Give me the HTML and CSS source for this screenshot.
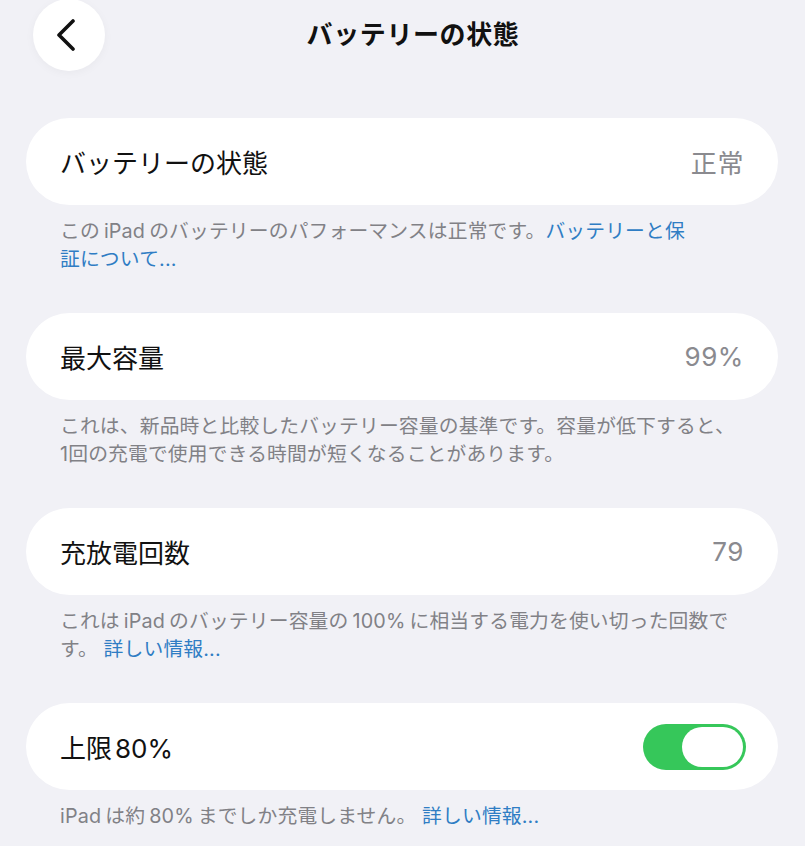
FILE: index.html
```html
<!DOCTYPE html>
<html lang="ja">
<head>
<meta charset="utf-8">
<title>バッテリーの状態</title>
<link rel="stylesheet" href="styles.css">
</head>
<body>
<div class="page">
  <header class="header">
    <div class="back">
      <svg width="20" height="32" viewBox="0 0 20 32" aria-hidden="true">
        <path d="M17 2 L3 16 L17 30" fill="none" stroke="#111" stroke-width="3.6" stroke-linecap="round" stroke-linejoin="round"/>
      </svg>
    </div>
    <h1 class="title">バッテリーの状態</h1>
    <div></div>
  </header>

  <main class="list">
    <section class="section">
      <div class="card">
        <span class="label">バッテリーの状態</span>
        <span class="value">正常</span>
      </div>
      <p class="note">この<span class="lat">iPad</span>のバッテリーのパフォーマンスは正常です。<span class="link">バッテリーと保<br>証について...</span></p>
    </section>

    <section class="section">
      <div class="card">
        <span class="label">最大容量</span>
        <span class="value">99%</span>
      </div>
      <p class="note">これは、新品時と比較したバッテリー容量の基準です。容量が低下すると、<br>1回の充電で使用できる時間が短くなることがあります。</p>
    </section>

    <section class="section">
      <div class="card">
        <span class="label">充放電回数</span>
        <span class="value">79</span>
      </div>
      <p class="note">これは<span class="lat">iPad</span>のバッテリー容量の<span class="lat">100%</span>に相当する電力を使い切った回数で<br>す。 <span class="link">詳しい情報...</span></p>
    </section>

    <section class="section">
      <div class="card">
        <span class="label">上限<span class="num">80%</span></span>
        <span class="toggle"><span class="knob"></span></span>
      </div>
      <p class="note"><span class="lat first">iPad</span>は約<span class="lat">80%</span>までしか充電しません。 <span class="link">詳しい情報...</span></p>
    </section>
  </main>
</div>
</body>
</html>
```

FILE: styles.css
```css
* { box-sizing: border-box; }

html, body {
  margin: 0;
  padding: 0;
}

body {
  background: #f1f1f6;
  font-family: Inter, "Noto Sans CJK JP", "Noto Sans", sans-serif;
  color: #111;
  width: 805px;
  height: 846px;
  overflow: hidden;
}

.page {
  padding: 0 27px 0 26px;
}

.header {
  display: grid;
  grid-template-columns: 80px 1fr 80px;
  align-items: center;
  height: 72px;
  margin-top: -1px;
}

.back {
  width: 72px;
  height: 72px;
  margin-left: 7px;
  border-radius: 50%;
  background: #ffffff;
  display: flex;
  align-items: center;
  justify-content: center;
  padding-right: 6px;
  box-shadow: 0 2px 10px rgba(0, 0, 0, 0.04);
}

.title {
  margin: 0;
  text-align: center;
  font-size: 26px;
  font-weight: 700;
  letter-spacing: 0.6px;
  padding-left: 22px;
  line-height: 1;
}

.list {
  margin-top: 47px;
}

.section {
  padding-bottom: 40px;
}

.card {
  height: 87px;
  border-radius: 44px;
  background: #ffffff;
  display: flex;
  align-items: center;
  justify-content: space-between;
  padding: 0 34px;
}

.label {
  font-size: 26px;
  color: #111;
}

.num {
  margin-left: 3px;
}

.value {
  font-size: 26px;
  color: #8a8a8f;
  letter-spacing: 0.6px;
}

.note {
  margin: 0;
  padding: 13px 0 0 34px;
  font-size: 19.8px;
  line-height: 27.5px;
  color: #818186;
  white-space: nowrap;
  letter-spacing: 0.15px;
}

.lat {
  margin: 0 4px;
}

.lat.first {
  margin-left: 0;
}

.link {
  color: #2f7dc4;
}

.toggle {
  width: 103px;
  height: 46px;
  border-radius: 23px;
  background: #36c75a;
  display: flex;
  justify-content: flex-end;
  align-items: center;
  padding: 3px;
  margin-right: -2px;
}

.knob {
  width: 61px;
  height: 40px;
  border-radius: 20px;
  background: #ffffff;
}
```
